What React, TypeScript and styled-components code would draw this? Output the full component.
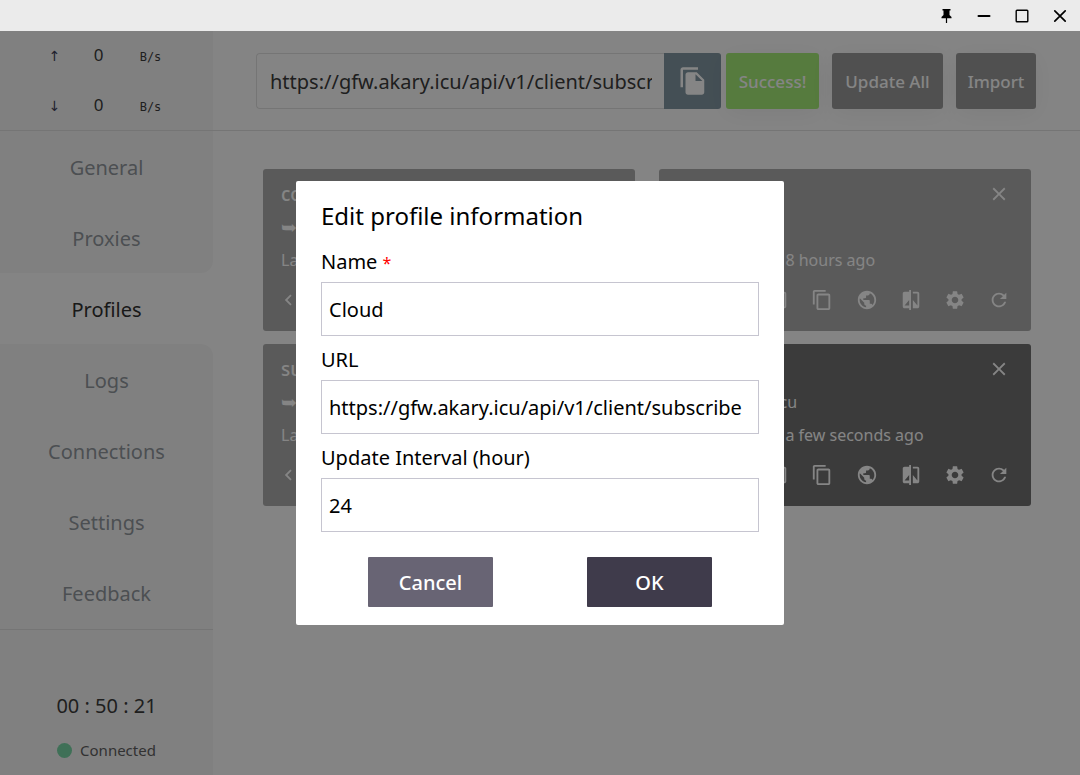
import React from "react";
import styled, { createGlobalStyle } from "styled-components";
import {
  MdClose,
  MdCode,
  MdCompare,
  MdContentCopy,
  MdCheckBoxOutlineBlank,
  MdEdit,
  MdFileCopy,
  MdPublic,
  MdRefresh,
  MdSettings,
} from "react-icons/md";

const sans = `"Noto Sans", "Open Sans", sans-serif`;

const GlobalStyle = createGlobalStyle`
  *, *::before, *::after { box-sizing: border-box; }
  body { margin: 0; font-family: ${sans}; background: #fefefe; }
  button, input { font-family: inherit; margin: 0; }
  button { border: 0; padding: 0; cursor: pointer; }
  h2, h3, p { margin: 0; padding: 0; font-weight: 400; }
`;

const Shell = styled.div`
  display: flex;
  flex-direction: column;
  min-height: 100vh;
`;

const TitleBar = styled.header`
  display: flex;
  justify-content: flex-end;
  height: 31px;
  padding-right: 1px;
  background: #ebebeb;
`;

const WindowButton = styled.button`
  display: grid;
  place-items: center;
  width: 38px;
  background: none;
  color: #000;
`;

const Body = styled.div`
  position: relative;
  display: flex;
  flex: 1;
`;

const Sidebar = styled.aside`
  display: flex;
  flex-direction: column;
  width: 213px;
  flex-shrink: 0;
`;

const Traffic = styled.div`
  height: 100px;
  background: #f6f6f6;
  border-bottom: 1px solid #e1e1e1;
`;

const TrafficRow = styled.div`
  display: grid;
  grid-template-columns: 20px 68px 36px;
  align-items: baseline;
  justify-content: center;
  height: 50px;
  padding-top: 12px;
  color: #3c3c3c;
  text-align: center;
`;

const Arrow = styled.span`
  font: 14px "DejaVu Sans", sans-serif;
  color: #40405a;
`;

const Speed = styled.span`
  font-size: 17px;
  line-height: 24px;
`;

const Unit = styled.span`
  font: 12px "DejaVu Sans Mono", monospace;
`;

const Nav = styled.nav`
  display: flex;
  flex-direction: column;
  padding-bottom: 1px;
  background: linear-gradient(#fefefe 80%, #f6f6f6 80%);
`;

const NavItem = styled.a<{ $active?: boolean; $edge?: "above" | "below" }>`
  display: grid;
  place-items: center;
  height: 71px;
  padding-top: 2px;
  font-size: 20px;
  text-decoration: none;
  color: ${(p) => (p.$active ? "#303030" : "#92989e")};
  background: ${(p) => (p.$active ? "#fefefe" : "#f6f6f6")};
  border-radius: ${(p) =>
    p.$edge === "above" ? "0 0 12px 0" : p.$edge === "below" ? "0 12px 0 0" : "0"};
`;

const Status = styled.div`
  display: flex;
  flex: 1;
  flex-direction: column;
  align-items: center;
  justify-content: flex-end;
  gap: 18px;
  padding-bottom: 13px;
  background: #f6f6f6;
  border-top: 1px solid #e1e1e1;
`;

const Uptime = styled.div`
  font-size: 20px;
  line-height: 28px;
  color: #3c3c3c;
`;

const Connection = styled.div`
  display: flex;
  align-items: center;
  gap: 8px;
  font-size: 15px;
  line-height: 24px;
  color: #606060;

  &::before {
    content: "";
    width: 15px;
    height: 15px;
    border-radius: 50%;
    background: #79d7a7;
  }
`;

const Main = styled.main`
  flex: 1;
  min-width: 0;
`;

const Toolbar = styled.div`
  display: flex;
  align-items: center;
  gap: 13px;
  height: 100px;
  padding: 0 44px 0 43px;
  border-bottom: 1px solid #e1e1e1;
`;

const Subscribe = styled.form`
  display: flex;
  flex: 1;
  min-width: 0;
  height: 56px;
  gap: 5px;
`;

const UrlBox = styled.div`
  display: flex;
  flex: 1;
  min-width: 0;
`;

const UrlInput = styled.input`
  flex: 1;
  min-width: 0;
  padding: 2px 12px 0 13px;
  font-size: 20px;
  color: #3c3c3c;
  background: transparent;
  border: 1px solid #e1e1e1;
  border-right: 0;
  border-radius: 4px 0 0 4px;
  outline: 0;
`;

const CopyButton = styled.button`
  display: grid;
  place-items: center;
  width: 57px;
  color: #fff;
  background: #8398a3;
  border-radius: 0 3px 3px 0;
`;

const ToolButton = styled.button<{ $width: number; $done?: boolean }>`
  flex-shrink: 0;
  width: ${(p) => p.$width}px;
  height: 56px;
  padding-top: 2px;
  font-size: 17px;
  font-weight: 500;
  white-space: nowrap;
  color: #fff;
  background: ${(p) => (p.$done ? "#a5eb77" : "#9a9a9a")};
  border-radius: 3px;
  box-shadow: 0 4px 24px rgba(0, 0, 0, 0.06);
`;

const Cards = styled.div`
  display: grid;
  grid-template-columns: 1fr 1fr;
  gap: 13px 24px;
  padding: 38px 49px 38px 50px;
`;

const Card = styled.article<{ $active?: boolean }>`
  height: 162px;
  padding: 9px 18px 0;
  color: #fff;
  background: ${(p) => (p.$active ? "#717171" : "#adadad")};
  border-radius: 3px;
`;

const CardHead = styled.div`
  display: flex;
  align-items: center;
  justify-content: space-between;
  height: 32px;
  padding-right: 3px;
`;

const CardTitle = styled.h3`
  font-size: 19px;
  font-weight: 500;
`;

const CardLine = styled.p`
  display: flex;
  align-items: center;
  gap: 6px;
  height: 33px;
  font-size: 16px;
  white-space: pre;
`;

const Dingbat = styled.span`
  font: 19px "DejaVu Sans", sans-serif;
`;

const IconButton = styled.button`
  display: grid;
  place-items: center;
  width: 22px;
  height: 22px;
  color: #fff;
  background: none;
`;

const CardActions = styled.div`
  display: flex;
  justify-content: space-between;
  margin-top: 13px;
  padding-left: 2px;
  padding-right: 3px;
`;

const Backdrop = styled.div`
  position: absolute;
  inset: 0;
  display: flex;
  align-items: center;
  justify-content: center;
  background: rgba(0, 0, 0, 0.48);
`;

const Dialog = styled.form`
  width: 488px;
  padding: 17px 25px 18px;
  color: #000;
  background: #fff;
  border-radius: 2px;
`;

const DialogTitle = styled.h2`
  margin-bottom: 14px;
  font-size: 24px;
  line-height: 36px;
`;

const Field = styled.label`
  display: block;
  margin-bottom: 10px;
  font-size: 20px;
  line-height: 28px;
`;

const Required = styled.span`
  font-size: 16px;
  line-height: 16px;
  color: #f00;
`;

const FieldInput = styled.input`
  display: block;
  width: 100%;
  height: 54px;
  margin-top: 6px;
  padding: 0 7px;
  font-size: 20px;
  color: #000;
  background: #fff;
  border: 1px solid #c6c5d0;
  outline: 0;
`;

const DialogActions = styled.div`
  display: flex;
  justify-content: space-around;
  padding-top: 15px;
`;

const DialogButton = styled.button<{ $primary?: boolean }>`
  width: 125px;
  height: 50px;
  font-size: 20px;
  font-weight: 500;
  color: #fff;
  background: ${(p) => (p.$primary ? "#3f3b4b" : "#686474")};
  border-radius: 1px;
`;

const navItems = ["General", "Proxies", "Profiles", "Logs", "Connections", "Settings", "Feedback"];
const activeIndex = navItems.indexOf("Profiles");
const url = "https://gfw.akary.icu/api/v1/client/subscribe";

const cards = [
  { name: "config", host: "local", updated: "8 hours ago" },
  { name: "default", host: "local", updated: "8 hours ago" },
  { name: "sub", host: "local", updated: "8 hours ago" },
  { name: "Cloud", host: "gfw.akary.icu", updated: "a few seconds ago", active: true },
];

const actions = [
  { label: "Code", Icon: MdCode },
  { label: "Edit", Icon: MdEdit },
  { label: "Open", Icon: MdCheckBoxOutlineBlank },
  { label: "Duplicate", Icon: MdContentCopy },
  { label: "Web", Icon: MdPublic },
  { label: "Compare", Icon: MdCompare },
  { label: "Configure", Icon: MdSettings },
  { label: "Refresh", Icon: MdRefresh },
];

function WindowControls() {
  return (
    <TitleBar>
      <WindowButton aria-label="Pin">
        <svg width="14" height="16" viewBox="0 0 14 16" fill="currentColor">
          <path d="M3.500 1h8v1.500h-1V7l2 2v1.200H8.100V15H6.900v-4.800H2.500V9l2-2V2.500h-1z" />
        </svg>
      </WindowButton>
      <WindowButton aria-label="Minimize">
        <svg width="14" height="14" viewBox="0 0 14 14">
          <path d="M1.500 7h11" stroke="currentColor" strokeWidth="2" strokeLinecap="round" />
        </svg>
      </WindowButton>
      <WindowButton aria-label="Maximize">
        <svg width="14" height="14" viewBox="0 0 14 14">
          <rect x="1.200" y="1.200" width="11.600" height="11.600" rx="0.800" fill="none" stroke="currentColor" strokeWidth="1.400" />
        </svg>
      </WindowButton>
      <WindowButton aria-label="Close">
        <svg width="14" height="14" viewBox="0 0 14 14">
          <path d="M1.800 1.800l10.400 10.400M12.200 1.800L1.800 12.200" stroke="currentColor" strokeWidth="1.700" strokeLinecap="round" />
        </svg>
      </WindowButton>
    </TitleBar>
  );
}

export default function App() {
  return (
    <Shell>
      <GlobalStyle />
      <WindowControls />
      <Body>
        <Sidebar>
          <Traffic>
            {["↑", "↓"].map((arrow) => (
              <TrafficRow key={arrow}>
                <Arrow>{arrow}</Arrow>
                <Speed>0</Speed>
                <Unit>B/s</Unit>
              </TrafficRow>
            ))}
          </Traffic>
          <Nav>
            {navItems.map((item, i) => (
              <NavItem
                key={item}
                href={`#${item.toLowerCase()}`}
                $active={i === activeIndex}
                $edge={i === activeIndex - 1 ? "above" : i === activeIndex + 1 ? "below" : undefined}
              >
                {item}
              </NavItem>
            ))}
          </Nav>
          <Status>
            <Uptime>00 : 50 : 21</Uptime>
            <Connection>Connected</Connection>
          </Status>
        </Sidebar>
        <Main>
          <Toolbar>
            <Subscribe>
              <UrlBox>
                <UrlInput aria-label="Subscription URL" defaultValue={url} />
                <CopyButton type="button" aria-label="Copy">
                  <MdFileCopy size={30} />
                </CopyButton>
              </UrlBox>
              <ToolButton type="button" $width={93} $done>
                Success!
              </ToolButton>
            </Subscribe>
            <ToolButton type="button" $width={111}>
              Update All
            </ToolButton>
            <ToolButton type="button" $width={80}>
              Import
            </ToolButton>
          </Toolbar>
          <Cards>
            {cards.map((card) => (
              <Card key={card.name} $active={card.active}>
                <CardHead>
                  <CardTitle>{card.name}</CardTitle>
                  <IconButton aria-label="Remove">
                    <MdClose size={22} />
                  </IconButton>
                </CardHead>
                <CardLine>
                  <Dingbat>➥</Dingbat>
                  {card.host}
                </CardLine>
                <CardLine>Last Updated: {card.updated}</CardLine>
                <CardActions>
                  {actions.map(({ label, Icon }) => (
                    <IconButton key={label} aria-label={label}>
                      <Icon size={22} />
                    </IconButton>
                  ))}
                </CardActions>
              </Card>
            ))}
          </Cards>
        </Main>
        <Backdrop>
          <Dialog role="dialog" aria-labelledby="dialog-title">
            <DialogTitle id="dialog-title">Edit profile information</DialogTitle>
            <Field>
              Name <Required>*</Required>
              <FieldInput defaultValue="Cloud" />
            </Field>
            <Field>
              URL
              <FieldInput defaultValue={url} />
            </Field>
            <Field>
              Update Interval (hour)
              <FieldInput defaultValue="24" />
            </Field>
            <DialogActions>
              <DialogButton type="button">Cancel</DialogButton>
              <DialogButton type="button" $primary>
                OK
              </DialogButton>
            </DialogActions>
          </Dialog>
        </Backdrop>
      </Body>
    </Shell>
  );
}
